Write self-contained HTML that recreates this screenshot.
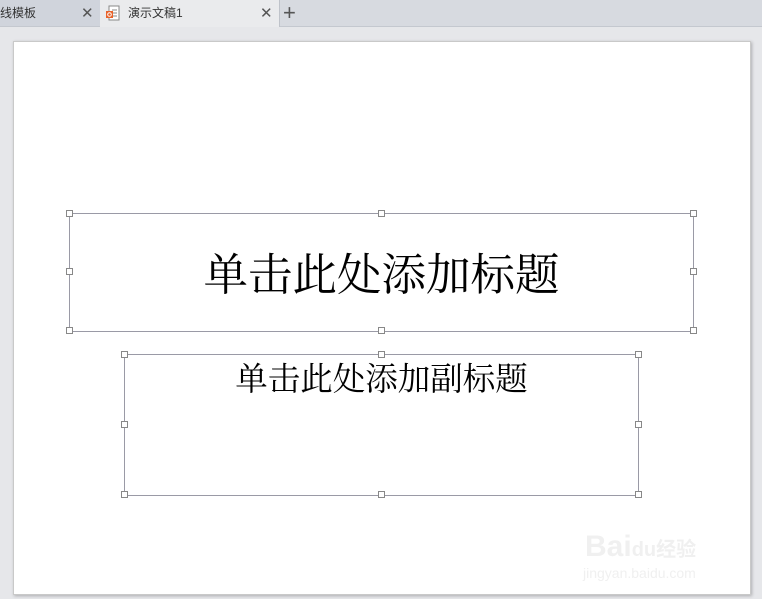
<!DOCTYPE html>
<html><head><meta charset="utf-8"><style>
body{margin:0;width:762px;height:599px;background:#e6e7ea;position:relative;overflow:hidden;font-family:"Liberation Sans","Noto Sans CJK SC",sans-serif}
.tabbar{position:absolute;left:0;top:0;width:762px;height:26px;background:#d7dae0;border-bottom:1px solid #c4c8cf}
.tab{position:absolute;top:0;height:26px;font-size:12px;line-height:27px;color:#333}
.slide{position:absolute;left:13px;top:41px;width:736px;height:552px;background:#fff;border:1px solid #c9c9c9;box-shadow:1px 1px 3px rgba(0,0,0,.25)}
.box{position:absolute;border:1px solid #9a9aa6}
.h{position:absolute;width:5px;height:5px;background:#fff;border:1px solid #888}
.t{position:absolute;font-family:"Liberation Serif","Noto Serif CJK SC",serif;color:#000;white-space:nowrap;text-align:center}
</style></head><body>
<div class="tabbar">
 <div class="tab" style="left:0;width:100px;background:#d0d4dc;border-right:1px solid #bfc3ca">线模板<span style="position:absolute;left:81px;color:#555;font-size:15px">✕</span></div>
 <div class="tab" style="left:100px;width:179px;height:27px;background:#eaebed;border-right:1px solid #bfc3ca">
  <svg style="position:absolute;left:5px;top:5px" width="16" height="16"><rect x="4" y="1" width="10" height="14" fill="#fff" stroke="#888"/><path d="M7 5h5M7 8h5M7 11h5" stroke="#888"/><rect x="1" y="6" width="7" height="7" fill="#e8632b"/><circle cx="4.5" cy="9.5" r="1.8" fill="none" stroke="#fff"/></svg>
  <span style="position:absolute;left:28px">演示文稿1</span><span style="position:absolute;left:160px;color:#555;font-size:15px">✕</span></div>
 <div class="tab" style="left:283px;font-size:22px;color:#555;line-height:26px">+</div>
</div>
<div class="slide"></div>
<div class="box" style="left:69px;top:213px;width:623px;height:117px"></div>
<div class="box" style="left:124px;top:354px;width:513px;height:140px"></div>
<div class="h" style="left:66px;top:210px"></div><div class="h" style="left:378px;top:210px"></div><div class="h" style="left:690px;top:210px"></div>
<div class="h" style="left:66px;top:268px"></div><div class="h" style="left:690px;top:268px"></div>
<div class="h" style="left:66px;top:327px"></div><div class="h" style="left:378px;top:327px"></div><div class="h" style="left:690px;top:327px"></div>
<div class="h" style="left:121px;top:351px"></div><div class="h" style="left:378px;top:351px"></div><div class="h" style="left:635px;top:351px"></div>
<div class="h" style="left:121px;top:421px"></div><div class="h" style="left:635px;top:421px"></div>
<div class="h" style="left:121px;top:491px"></div><div class="h" style="left:378px;top:491px"></div><div class="h" style="left:635px;top:491px"></div>
<div class="t" style="left:69px;width:625px;top:243px;font-size:44.5px;line-height:64px">单击此处添加标题</div>
<div class="t" style="left:124px;width:515px;top:357px;font-size:32.5px;line-height:46px">单击此处添加副标题</div>
<div style="position:absolute;left:585px;top:530px;font-size:30px;font-weight:bold;color:#f0f0f0;font-family:'Liberation Sans',sans-serif">Bai<span style="font-size:20px">du</span><span style="font-family:'Noto Sans CJK SC';font-size:20px">经验</span></div>
<div style="position:absolute;left:583px;top:565px;font-size:14px;color:#f0f0f0">jingyan.baidu.com</div>
</body></html>
